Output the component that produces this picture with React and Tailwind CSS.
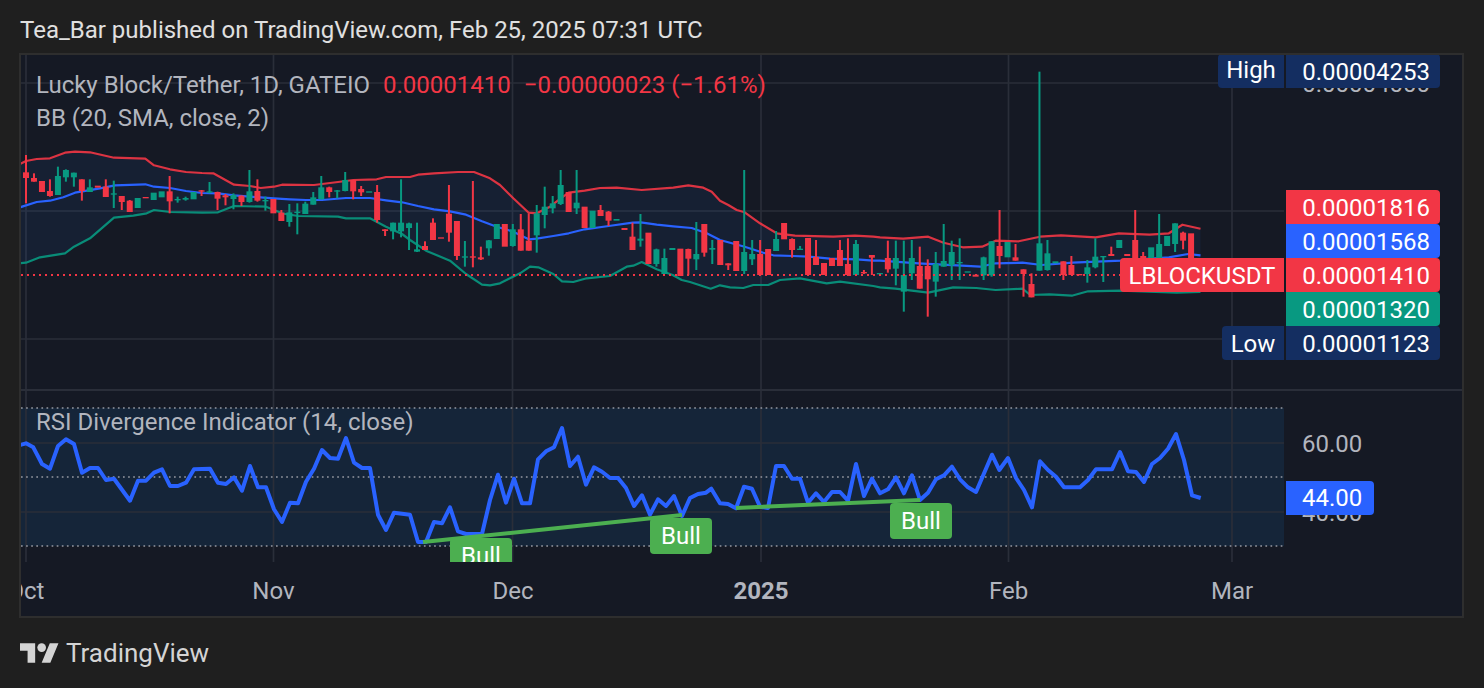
const A = [
['r',375,390],
['r',367,384,315,460],['r',384,395,370,395],['r',393,426],['r',423,438,388,440],['g',378,435,350,435],['g',360,382,358,395],['g',368,382,368,410],['r',388,423,388,452],['g',412,426,388,426],['r',407,413],
['r',410,441,388,441],['g',430,434,392,474],['r',438,456,438,480],['r',452,486,450,486],['g',444,474],['r',441,445],['g',428,450],['g',424,442],['r',424,454,378,490],['g',447,451,440,458],
['g',444,449,440,452],['g',426,448],['r',421,425,420,438],['g',424,428,396,430],['r',426,446,425,480],['r',436,442,432,466],['g',435,447,430,478],['r',437,456,436,468],['g',424,456,360,458],['r',423,452,388,455],
['g',450,454,440,482],['r',447,490],['r',488,513,480,513],['g',487,516,462,530],['g',485,489,460,553],['g',461,492,455,492],['g',442,464,426,464],['g',412,448,378,448],['r',412,426,410,442],['g',421,425,420,445],
['g',390,423,366,424],['r',390,424,390,448],['r',417,427,408,438],['g',424,428],['r',426,510,405,518],['r',538,543,538,558],['g',518,544,518,568],['g',518,544,388,562],['g',520,534,518,600],['g',598,605,518,606],
['r',588,600,574,600],['r',518,570,505,570],['r',562,566],['r',491,548,405,575],['r',513,618,513,630],['g',619,623,573,650],['r',619,623,393,652],['r',622,628,590,630],['g',571,595,570,617],['g',522,567],
];
const B = [
['r',222,290],['g',238,288,222,290],['r',238,302,192,302],['r',272,302,190,302],['g',190,256,165,308],['g',170,195,110,235],['g',160,175,138,190],['g',105,162,60,165],['r',126,186],['g',158,175,60,192],
['r',170,234],['g',182,234],['r',180,198,165,198],['r',185,212,183,228],['g',207,212],['r',234,240],['r',260,300,218,300],['g',266,272,192,290],['r',248,342],['g',298,342,296,350],
['g',324,372,296,372],['g',294,300],['r',296,378],['r',297,326,296,375],['g',312,328,216,360],['r',222,308,222,320],['g',294,299,270,342],['r',270,345],['r',340,346,340,360],['r',273,363],
['g',306,363,60,372],['g',312,328,270,345],['r',312,375,270,375],['r',297,375],['g',267,303,243,303],['r',219,268],['r',267,300,265,323],['g',296,300,288,300],['r',264,375],['r',321,345,270,345],
['r',339,375],['r',324,348],['r',300,348,270,348],['r',342,375,265,378],['g',282,375,270,375],['r',366,370,360,372],['r',315,323,315,375],['g',369,373],
];
const C = [
['r',624,658,572,668],['g',624,656,572,706],['g',675,725,572,785],['g',624,670,570,690],['r',648,716,590,716],['r',648,688,628,800],['g',642,695,606,740],['g',633,650,522,650],['g',606,646,572,690],['g',636,640,565,690],
['g',664,668],['r',674,680],['g',622,676,620,690],['g',574,676,573,680],['r',588,618,480,655],['g',576,622],['r',622,632,582,632],['r',658,672,658,740],['r',702,742,670,742],['g',580,662,65,662],
['g',610,660,570,662],['g',634,640],['r',634,675,634,690],['r',645,675,618,675],['r',672,676],['g',652,672,630,698],['g',620,652,565,655],['g',618,622,618,696],['r',612,618,590,618],['g',570,594],
['r',612,618],['r',570,624,480,624],['r',618,624,606,624],['g',592,625],['g',582,625,492,625],['g',558,588],['g',520,582,520,606],['r',548,572,545,598],['r',550,624],
];
const candles = [
  ...A.map((c, i) => ({ c, i: i - 1, base: 50 })),
  ...B.map((c, i) => ({ c, i: i + 60, base: 150 })),
  ...C.map((c, i) => ({ c, i: i + 108, base: 50 })),
];
const z1 = (p) => [p[0] / 3, 50 + p[1] / 3];
const z2 = (p) => [500 + p[0] / 3, 150 + p[1] / 3];
const z3 = (p) => [880 + p[0] / 2.596, 50 + p[1] / 3];
const upper = [
  ...[[60,342],[78,333],[110,327],[150,325],[195,308],[225,305],[270,307],[342,323],[436,326],[462,346],[510,358],[558,366],[606,369],[640,370],[702,404],[750,408],[782,414],[822,410],[846,404],[942,405],[1014,396],[1060,390],[1130,388],[1158,381],[1230,381],[1254,374],[1302,370],[1374,366],[1422,366],[1470,385]].map(z1),
  ...[[0,105],[40,145],[86,188],[110,190],[150,170],[182,145],[206,128],[254,122],[300,114],[350,113],[425,120],[520,113],[565,106],[610,113],[635,125],[660,152],[685,165],[710,180],[734,187],[780,220],[830,250],[885,257],[1000,260],[1065,257],[1120,260]].map(z2),
  ...[[0,562],[60,566],[125,560],[165,578],[215,592],[265,590],[300,572],[360,574],[415,560],[470,556],[560,562],[620,550],[700,554],[750,550],[785,524],[832,536]].map(z3),
];
const middle = [
  ...[[60,472],[110,456],[150,452],[190,442],[225,428],[300,415],[345,406],[436,403],[462,410],[510,414],[558,423],[606,429],[654,430],[702,436],[750,440],[822,445],[870,448],[918,450],[966,450],[1038,444],[1110,444],[1158,451],[1206,457],[1254,468],[1302,478],[1350,484],[1398,494],[1446,514],[1490,530]].map(z1),
  ...[[40,245],[86,268],[110,266],[160,258],[206,250],[254,238],[326,228],[398,218],[422,217],[470,224],[520,229],[575,234],[620,250],[660,270],[734,290],[790,308],[820,316],[880,318],[926,320],[990,326],[1070,328],[1120,332]].map(z2),
  ...[[0,632],[100,640],[200,646],[260,650],[300,640],[370,638],[420,645],[500,638],[625,632],[750,622],[800,612],[832,616]].map(z3),
];
const lower = [
  ...[[60,640],[78,638],[120,622],[195,610],[222,590],[270,565],[342,503],[400,497],[440,490],[462,480],[510,486],[606,488],[654,487],[702,468],[798,470],[846,490],[894,498],[1014,500],[1038,505],[1110,505],[1158,530],[1206,552],[1230,570],[1278,602],[1350,632],[1398,672],[1446,704],[1470,706]].map(z1),
  ...[[0,400],[60,370],[90,350],[115,352],[160,372],[186,394],[220,396],[260,385],[330,378],[380,350],[400,347],[425,336],[470,358],[518,375],[545,390],[570,396],[632,416],[660,406],[690,412],[730,414],[760,405],[805,405],[840,390],[900,385],[980,400],[1020,395],[1120,408]].map(z2),
  ...[[0,712],[40,716],[125,728],[190,712],[250,714],[300,720],[370,716],[390,735],[440,733],[498,737],[540,724],[625,722],[770,728],[832,726]].map(z3),
];
const r1 = (p) => [p[0] / 3, 390 + p[1] / 3];
const r2 = (p) => [500 + p[0] / 3, 390 + p[1] / 3];
const r3 = (p) => [1000 + p[0] / 3, 390 + p[1] / 3];
const rsi = [
  ...[[60,165],[78,160],[100,172],[126,222],[150,236],[174,168],[198,148],[222,162],[246,248],[270,234],[294,234],[318,270],[342,266],[390,332],[414,272],[438,272],[462,248],[486,238],[510,288],[534,288],[558,278],[582,238],[630,236],[654,278],[678,282],[702,262],[726,302],[750,228],[774,292],[798,292],[822,358],[846,396],[870,338],[894,340],[918,275],[942,236],[966,180],[990,204],[1014,206],[1038,144],[1062,218],[1086,234],[1110,234],[1134,374],[1158,420],[1182,368],[1230,374],[1254,456],[1278,456],[1302,396],[1326,400],[1350,352],[1374,424],[1398,432],[1446,432],[1470,330],[1494,254]].map(r1),
  ...[[18,338],[42,266],[66,340],[90,340],[114,208],[138,184],[162,172],[186,114],[210,228],[234,200],[258,284],[282,232],[306,245],[330,264],[354,264],[378,294],[402,348],[426,316],[450,374],[474,328],[498,348],[522,318],[546,378],[570,324],[594,312],[618,308],[634,296],[660,340],[684,342],[708,355],[732,290],[756,296],[780,350],[804,354],[828,228],[852,228],[876,266],[900,266],[924,338],[948,310],[972,336],[996,306],[1020,306],[1044,332],[1068,222],[1092,318],[1116,266],[1140,310],[1164,298],[1188,262],[1212,310],[1236,256],[1260,330],[1284,308],[1308,268],[1332,256],[1356,230],[1380,268],[1404,292],[1428,306],[1476,194]].map(r2),
  ...[[-2,240],[24,204],[48,264],[72,300],[96,352],[120,214],[144,240],[168,260],[192,292],[240,292],[264,270],[288,238],[336,238],[360,186],[384,244],[408,246],[432,276],[456,222],[480,204],[504,176],[528,132],[552,210],[576,316],[602,324]].map(r3),
];
const pts = (a) => a.map((p) => p[0].toFixed(1) + ',' + p[1].toFixed(1)).join(' ');
const grid = [26, 273.5, 512.5, 761, 1008.5, 1232];

function MainDrawing() {
  return (
    <svg className="block w-full h-full" viewBox="21 55 1441 334">
      {grid.map((x) => <line key={x} x1={x} x2={x} y1="55" y2="389" stroke="#2a2e39" strokeWidth="1.7" />)}
      {[83, 211, 339].map((y) => <line key={y} x1="21" x2="1284" y1={y} y2={y} stroke="#2a2e39" strokeWidth="1.7" />)}
      <polygon points={pts([...upper, ...[...lower].reverse()])} fill="#2979ff" fillOpacity="0.07" />
      <polyline points={pts(upper)} fill="none" stroke="#f23645" strokeOpacity="0.9" strokeWidth="2.2" strokeLinejoin="round" />
      <polyline points={pts(lower)} fill="none" stroke="#089981" strokeOpacity="0.9" strokeWidth="2.2" strokeLinejoin="round" />
      <polyline points={pts(middle)} fill="none" stroke="#2962ff" strokeWidth="2.2" strokeLinejoin="round" />
      {candles.map(({ c, i, base }) => {
        const x = 26 + 7.98 * i;
        const col = c[0] === 'r' ? '#f23645' : '#089981';
        const y = (v) => base + v / 3;
        const bt = y(c[1]);
        const bb = y(c[2]);
        return (
          <g key={i} fill={col}>
            {c[3] !== undefined && <rect x={x - 1} width="2" y={y(c[3])} height={y(c[4]) - y(c[3])} />}
            <rect x={x - 3} width="6" y={bt} height={bb - bt} />
          </g>
        );
      })}
      <line x1="21" x2="1284" y1="275" y2="275" stroke="#f23645" strokeWidth="2" strokeDasharray="2 4" />
    </svg>
  );
}

function RsiDrawing() {
  return (
    <svg className="block w-full h-full" viewBox="21 391 1441 171">
      <rect x="21" y="408" width="1263" height="138" fill="#2196f3" fillOpacity="0.1" />
      {grid.map((x) => <line key={x} x1={x} x2={x} y1="391" y2="562" stroke="#2a2e39" strokeWidth="1.7" />)}
      {[443, 512].map((y) => <line key={y} x1="21" x2="1284" y1={y} y2={y} stroke="#2a2e39" strokeWidth="1.7" />)}
      {[408, 477, 546].map((y) => <line key={y} x1="21" x2="1284" y1={y} y2={y} stroke="#9598a1" strokeWidth="1.7" strokeDasharray="1.7 3.4" />)}
      <polyline points={pts(rsi)} fill="none" stroke="#2962ff" strokeWidth="4" strokeLinejoin="round" />
      <line x1="423" y1="542" x2="682" y2="515" stroke="#4caf50" strokeWidth="4" />
      <line x1="736" y1="508" x2="920" y2="500" stroke="#4caf50" strokeWidth="4" />
    </svg>
  );
}

function PriceRow({ name, nameWidth, nameBg, bg, children }) {
  return (
    <div className="flex h-[34px] gap-[2px] justify-end text-white leading-[36px]">
      {name && <span className={`h-[34px] text-center rounded-l-[4px] ${nameBg} ${nameWidth}`}>{name}</span>}
      <span className={`w-[154px] h-[34px] text-right pr-[10px] rounded-r-[4px] ${bg}`}>{children}</span>
    </div>
  );
}
function Bull({ left, top, height }) {
  return (
    <div className={`absolute w-[62px] bg-[#4caf50] text-white flex items-center justify-center ${left} ${top} ${height}`}>
      Bull
    </div>
  );
}
function Tick({ left, bold, children }) {
  return (
    <span className={`absolute top-[12px] -translate-x-1/2 ${left} ${bold ? 'font-bold' : ''}`}>{children}</span>
  );
}

export default function App() {
  return (
    <div className="w-[1484px] h-[688px] bg-[#1f1f1f] flex flex-col overflow-hidden font-['Roboto',sans-serif] text-[24px] leading-[34px]">
      <div className="h-[53px] shrink-0 pl-[20px] pt-[13px] text-[#e0e0e0]">Tea_Bar published on TradingView.com, Feb 25, 2025 07:31 UTC</div>
      <div className="mx-[19px] w-[1445px] h-[565px] shrink-0 border-2 border-[#2e2e2e] bg-[#151924] flex flex-col">
        <div className="relative h-[334px] shrink-0 overflow-hidden">
          <MainDrawing />
          <div className="absolute left-[15px] top-[13px] flex flex-col text-[#b2b5be]">
            <div className="flex gap-[13px] h-[33px]">
              <span>Lucky Block/Tether, 1D, GATEIO</span>
              <span className="text-[#f23645]">0.00001410</span>
              <span className="text-[#f23645]">−0.00000023 (−1.61%)</span>
            </div>
            <div>BB (20, SMA, close, 2)</div>
          </div>
          <span className="absolute right-[32px] top-[12px] text-[#b2b5be]">0.00004000</span>
          <div className="absolute right-[22px] top-[-1px]">
            <PriceRow name={<span className="block -mt-[2px]">High</span>} nameWidth="w-[66px]" nameBg="bg-[#142e61]" bg="bg-[#142e61]">0.00004253</PriceRow>
          </div>
          <div className="absolute right-[22px] top-[135px] flex flex-col">
            <PriceRow bg="bg-[#f23645]">0.00001816</PriceRow>
            <PriceRow bg="bg-[#2962ff]">0.00001568</PriceRow>
            <PriceRow name="LBLOCKUSDT" nameWidth="w-[164px]" nameBg="bg-[#f23645]" bg="bg-[#f23645]">0.00001410</PriceRow>
            <PriceRow bg="bg-[#089981]">0.00001320</PriceRow>
            <PriceRow name="Low" nameWidth="w-[62px]" nameBg="bg-[#142e61]" bg="bg-[#142e61]">0.00001123</PriceRow>
          </div>
        </div>
        <div className="h-[2px] shrink-0 bg-[#2a2e39]" />
        <div className="relative h-[171px] shrink-0 overflow-hidden">
          <RsiDrawing />
          <div className="absolute left-[15px] top-[14px] text-[#b2b5be]">RSI Divergence Indicator (14, close)</div>
          <span className="absolute left-[1281px] top-[36px] text-[#b2b5be]">60.00</span>
          <span className="absolute left-[1281px] top-[105px] text-[#b2b5be]">40.00</span>
          <div className="absolute left-[1265px] top-[90px] w-[88px] h-[34px] bg-[#2962ff] text-white rounded-r-[4px] pl-[16px] leading-[35px]">44.00</div>
          <Bull left="left-[429px] rounded-t-[4px]" top="top-[147px]" height="h-[36px]" />
          <Bull left="left-[629px] rounded-[4px]" top="top-[127px]" height="h-[36px]" />
          <Bull left="left-[869px] rounded-[4px]" top="top-[112px]" height="h-[36px]" />
        </div>
        <div className="relative flex-1 overflow-hidden text-[#b2b5be]">
          <Tick left="left-[5px]">Oct</Tick>
          <Tick left="left-[252.5px]">Nov</Tick>
          <Tick left="left-[492px]">Dec</Tick>
          <Tick left="left-[740px]" bold>2025</Tick>
          <Tick left="left-[987.5px]">Feb</Tick>
          <Tick left="left-[1211px]">Mar</Tick>
        </div>
      </div>
      <div className="flex items-center gap-[7px] pl-[20px] h-[74px] text-[#d4d4d4] text-[26px]">
        <svg width="39" height="20" viewBox="0 4 36 18" fill="#d4d4d4" className="block">
          <path d="M14 22H7V11H0V4h14v18zM28 22h-8l7.5-18h8L28 22z" />
          <circle cx="20" cy="8" r="4" />
        </svg>
        <span>TradingView</span>
      </div>
    </div>
  );
}
